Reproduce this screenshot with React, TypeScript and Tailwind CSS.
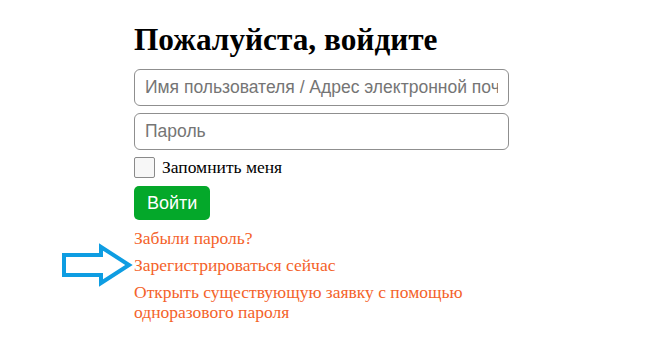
export default function App() {
  return (
    <div className="relative min-h-[352px] w-[652px] bg-white font-['Liberation_Serif',serif] text-black">
      <div className="ml-[134px] w-[375px] pt-[22px]">
        <h1 className="text-[31.3px] font-bold leading-[36px]">Пожалуйста, войдите</h1>
        <form className="mt-[11px] flex flex-col" onSubmit={(e) => e.preventDefault()}>
          <input
            type="text"
            placeholder="Имя пользователя / Адрес электронной почты"
            className="h-[37px] w-full rounded-[6px] border border-[#8f8f8f] px-[10px] font-['Liberation_Sans',Arial,sans-serif] text-[17.5px] placeholder:text-[#757575]"
          />
          <input
            type="password"
            placeholder="Пароль"
            className="mt-[7px] h-[37px] w-full rounded-[6px] border border-[#8f8f8f] px-[10px] font-['Liberation_Sans',Arial,sans-serif] text-[17.5px] placeholder:text-[#757575]"
          />
          <label className="mt-[6px] flex items-center gap-[7px] text-[17.5px] leading-[22px]">
            <span className="h-[21px] w-[21px] rounded-[2px] border border-[#8a8a8a] bg-[#f7f7f7]" />
            Запомнить меня
          </label>
          <div className="mt-[8px]">
            <button
              type="submit"
              className="h-[34px] rounded-[5px] bg-[#04a82a] px-[13px] font-['Liberation_Sans',Arial,sans-serif] text-[18px] text-white"
            >
              Войти
            </button>
          </div>
        </form>
        <div className="mt-[8px] flex flex-col gap-[7px] text-[17.5px] leading-[20px] text-[#f4622a]">
          <a href="#">Забыли пароль?</a>
          <a href="#">Зарегистрироваться сейчас</a>
          <a href="#">Открыть существующую заявку с помощью одноразового пароля</a>
        </div>
      </div>

      {/* annotation arrow */}
      <svg className="absolute left-[60px] top-[243px]" width="74" height="44" viewBox="0 0 74 44">
        <path
          d="M4 12 H41 V4 L69 22 L41 40 V32 H4 Z"
          fill="none"
          stroke="#0e9de2"
          strokeWidth="4"
          strokeLinejoin="miter"
        />
      </svg>
    </div>
  );
}
